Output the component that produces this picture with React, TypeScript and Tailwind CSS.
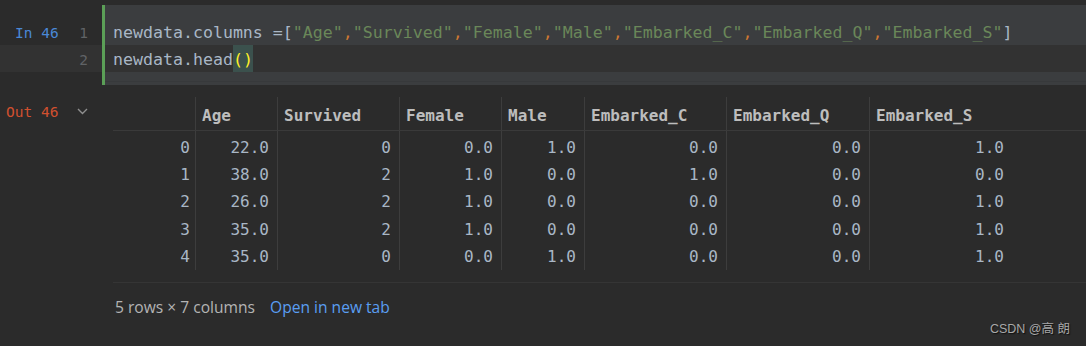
import React from "react";

const mono = { fontFamily: '"DejaVu Sans Mono", "Liberation Mono", monospace' };

const cols = [
  { name: "", w: "w-[82px]" },
  { name: "Age", w: "w-[82px]" },
  { name: "Survived", w: "w-[122px]" },
  { name: "Female", w: "w-[102px]" },
  { name: "Male", w: "w-[83px]" },
  { name: "Embarked_C", w: "w-[142px]" },
  { name: "Embarked_Q", w: "w-[143px]" },
  { name: "Embarked_S", w: "w-[143px]" },
];

const rows = [
  ["0", "22.0", "0", "0.0", "1.0", "0.0", "0.0", "1.0"],
  ["1", "38.0", "2", "1.0", "0.0", "1.0", "0.0", "0.0"],
  ["2", "26.0", "2", "1.0", "0.0", "0.0", "0.0", "1.0"],
  ["3", "35.0", "2", "1.0", "0.0", "0.0", "0.0", "1.0"],
  ["4", "35.0", "0", "0.0", "1.0", "0.0", "0.0", "1.0"],
];

function Str({ s }: { s: string }) {
  return <span className="text-[#6a8759]">"{s}"</span>;
}
function Comma() {
  return <span className="text-[#cc7832]">,</span>;
}

export default function App() {
  const names = ["Age", "Survived", "Female", "Male", "Embarked_C", "Embarked_Q", "Embarked_S"];
  return (
    <div className="relative w-[1086px] h-[346px] bg-[#2b2b2b] overflow-hidden pt-[5px]">
      {/* input cell */}
      <div className="flex">
        <div className="w-[102px] flex flex-col text-[14.5px]" style={mono}>
          <div className="h-[13px]" />
          <div className="h-[27px] flex items-center pt-[3px] leading-none">
            <span className="ml-[15px] text-[#4a88d6]">In 46</span>
            <span className="ml-auto mr-[14px] text-[#606366]">1</span>
          </div>
          <div className="h-[27px] flex items-center pt-[3px] bg-[#323232] leading-none">
            <span className="ml-auto mr-[14px] text-[#606366]">2</span>
          </div>
          <div className="h-[13px]" />
        </div>
        <div className="w-[3px] bg-[#5b9f57]" />
        <div className="flex-1 flex flex-col bg-[#3b3d3f] text-[16.6px] text-[#a9b7c6]" style={mono}>
          <div className="h-[13px]" />
          <div className="h-[27px] flex items-center pt-[3px] pl-[8px] whitespace-pre leading-none">
            <span>newdata.columns =[</span>
            {names.map((n, i) => (
              <React.Fragment key={n}>
                {i > 0 && <Comma />}
                <Str s={n} />
              </React.Fragment>
            ))}
            <span>]</span>
          </div>
          <div className="h-[27px] flex items-stretch pl-[8px] bg-[#323232] whitespace-pre leading-none">
            <span className="flex items-center pt-[3px]">newdata.head</span>
            <span className="bg-[#3b514d] text-[#ffef28] flex items-center pt-[3px]">()</span>
          </div>
          <div className="h-[9px]" />
          <div className="h-px bg-[#37393b]" />
          <div className="h-[3px]" />
        </div>
      </div>

      {/* output */}
      <div className="flex">
        <div className="w-[113px] pt-[19px] flex items-start" style={mono}>
          <span className="ml-[6px] text-[14.5px] leading-[17px] text-[#d1502f]">Out 46</span>
          <svg className="ml-[19px] mt-[4px]" width="11" height="7" viewBox="0 0 11 7">
            <path d="M1 1 L5.5 5.5 L10 1" stroke="#8f8f8f" strokeWidth="1.4" fill="none" />
          </svg>
        </div>
        <div className="flex-1 pt-[12px]">
          <div className="flex flex-col text-[16px]" style={mono}>
            <div className="flex h-[34px] border-b border-[#3a3a3a]">
              {cols.map((c, i) => (
                <div
                  key={i}
                  className={`${c.w} ${i > 0 ? "border-l border-[#3d3d3d]" : ""} flex items-center pl-[6px] pt-[4px] font-bold text-[#bdbdbd] leading-none`}
                >
                  {c.name}
                </div>
              ))}
            </div>
            <div className="flex flex-col">
              {rows.map((r, ri) => (
                <div key={ri} className={`flex ${ri === 0 ? "h-[29.4px]" : "h-[27.4px]"}`}>
                  {r.map((v, ci) => (
                    <div
                      key={ci}
                      className={`${cols[ci].w} ${ci > 0 ? "border-l border-[#3d3d3d] pr-[8px]" : "pr-[5px]"} ${ri === 0 ? "pt-[5px]" : "pt-[2px]"} flex items-center justify-end text-[#a9b7c6] leading-none`}
                    >
                      {v}
                    </div>
                  ))}
                </div>
              ))}
            </div>
          </div>
          <div className="mt-[12px] h-px bg-[#353535]" />
          <div
            className="flex items-center h-[50px] pl-[2px] text-[15.6px]"
            style={{ fontFamily: '"Open Sans", "Noto Sans", sans-serif' }}
          >
            <span className="text-[#b4b4b4]">5 rows × 7 columns</span>
            <span className="ml-[15px] text-[#5a9ef2]">Open in new tab</span>
          </div>
        </div>
      </div>

      <div
        className="absolute right-[16px] bottom-[7px] text-[12.5px] text-[#a8a8a8] [text-shadow:1px_1px_1px_#111]"
        style={{ fontFamily: '"Liberation Sans", "Noto Sans CJK SC", sans-serif' }}
      >
        CSDN @高 朗
      </div>
    </div>
  );
}
